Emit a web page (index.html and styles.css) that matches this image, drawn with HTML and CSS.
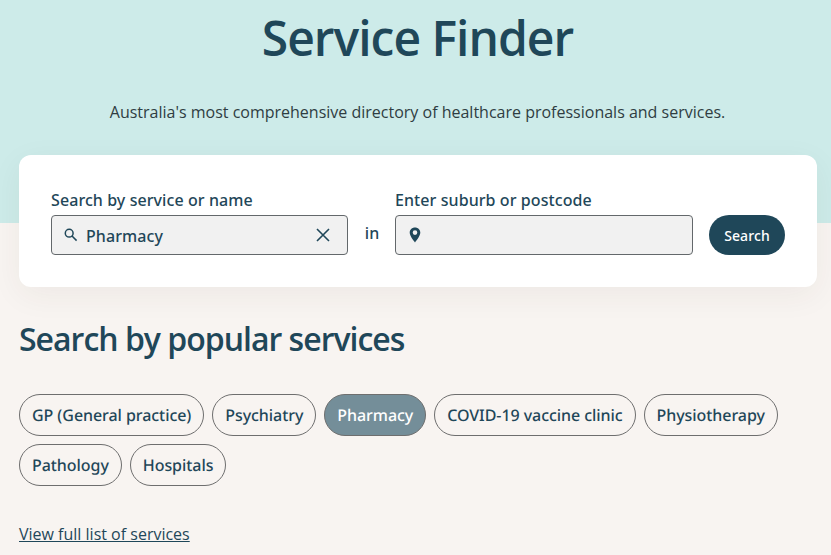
FILE: index.html
```html
<!DOCTYPE html>
<html lang="en">
<head>
    <meta charset="UTF-8">
    <meta name="viewport" content="width=device-width, initial-scale=1.0">
    <title>Service Finder</title>
    <link rel="stylesheet" href="styles.css">
</head>
<body>
    <div class="hero">
        <h1 class="title">Service Finder</h1>
        <p class="subtitle">Australia's most comprehensive directory of healthcare professionals and services.</p>
    </div>

    <div class="content">
        <!-- Search card -->
        <form class="search-card">
            <div class="field field-service">
                <label for="service">Search by service or name</label>
                <div class="input-box">
                    <svg class="icon-search" width="14" height="14" viewBox="0 0 14 14" fill="none" stroke="#1f4759" stroke-width="1.5">
                        <circle cx="5.2" cy="5.2" r="3.9"/>
                        <path d="M8 8 L12.6 12.6"/>
                    </svg>
                    <input type="text" id="service" value="Pharmacy">
                    <svg class="icon-clear" width="14" height="14" viewBox="0 0 14 14" fill="none" stroke="#1f4759" stroke-width="1.6">
                        <path d="M1 1 L13 13 M13 1 L1 13"/>
                    </svg>
                </div>
            </div>
            <span class="in-word">in</span>
            <div class="field field-suburb">
                <label for="suburb">Enter suburb or postcode</label>
                <div class="input-box">
                    <svg class="icon-pin" width="12" height="16" viewBox="0 0 12 16">
                        <path fill="#1f4759" fill-rule="evenodd" d="M6 .5C3 .5.7 2.700.7 5.600c0 3.200 3.200 7.200 5.300 9.900 2.100-2.700 5.300-6.700 5.300-9.900C11.300 2.700 9 .5 6 .5ZM6 3.300a2.300 2.300 0 1 1 0 4.600 2.300 2.300 0 0 1 0-4.600Z"/>
                    </svg>
                    <input type="text" id="suburb">
                </div>
            </div>
            <button type="button" class="search-btn">Search</button>
        </form>

        <h2 class="popular-title">Search by popular services</h2>

        <div class="chips">
            <a class="chip">GP (General practice)</a>
            <a class="chip">Psychiatry</a>
            <a class="chip active">Pharmacy</a>
            <a class="chip">COVID-19 vaccine clinic</a>
            <a class="chip">Physiotherapy</a>
            <a class="chip">Pathology</a>
            <a class="chip">Hospitals</a>
        </div>

        <a class="full-list" href="#">View full list of services</a>
    </div>
</body>
</html>
```
FILE: styles.css
```css
html, body {
    height: 100%;
}

body {
    font-family: "Open Sans", "Noto Sans", sans-serif;
    background-color: #f8f4f1;
    color: #1f4759;
    margin: 0;
    padding: 0;
    overflow: hidden;
}

.hero {
    background-color: #cdebe9;
    height: 223px;
    padding-left: 4px;
    box-sizing: border-box;
    text-align: center;
    overflow: hidden;
}

.title {
    font-size: 48px;
    line-height: 60px;
    font-weight: 600;
    letter-spacing: -1px;
    margin: 8px 0 0 0;
}

.subtitle {
    font-size: 16px;
    line-height: 24px;
    color: #2f3d42;
    margin: 32px 0 0 0;
}

.content {
    padding: 0 14px 0 19px;
}

.search-card {
    display: flex;
    align-items: flex-end;
    height: 132px;
    box-sizing: border-box;
    margin-top: -68px;
    padding: 0 32px 32px 32px;
    background-color: white;
    border-radius: 12px;
    box-shadow: 0px 8px 32px rgba(60, 50, 40, 0.06);
    position: relative;
}

.field label {
    display: block;
    font-family: "Noto Sans", sans-serif;
    font-size: 16px;
    line-height: 22px;
    font-weight: 500;
    letter-spacing: 0.08px;
    margin-bottom: 4px;
}

.field-service {
    width: 297px;
}

.field-suburb {
    width: 298px;
}

.input-box {
    display: flex;
    align-items: center;
    height: 40px;
    box-sizing: border-box;
    background-color: #f1f1f1;
    border: 1px solid #63686b;
    border-radius: 4px;
    padding: 0 17px 0 12px;
}

.input-box input {
    flex: 1;
    min-width: 0;
    border: none;
    outline: none;
    background: none;
    padding: 2px 0 0 0;
    font-family: "Noto Sans", sans-serif;
    font-size: 16px;
    font-weight: 500;
    letter-spacing: 0.08px;
    color: #1f4759;
}

.icon-search {
    margin-right: 8px;
}

.icon-pin {
    margin-left: 1px;
}

.in-word {
    width: 47px;
    box-sizing: border-box;
    padding-left: 1px;
    text-align: center;
    font-family: "Noto Sans", sans-serif;
    font-size: 16px;
    line-height: 36px;
    height: 40px;
    font-weight: 500;
}

.search-btn {
    width: 76px;
    height: 40px;
    margin-left: 16px;
    padding: 0;
    background-color: #1f4759;
    color: white;
    border: none;
    border-radius: 20px;
    font-family: "Noto Sans", sans-serif;
    font-size: 14px;
    font-weight: 500;
    letter-spacing: 0.1px;
}

.popular-title {
    font-size: 32px;
    line-height: 44px;
    font-weight: 600;
    letter-spacing: -1px;
    margin: 30px 0 0 0;
}

.chips {
    display: flex;
    flex-wrap: wrap;
    gap: 8px;
    margin-top: 33px;
}

.chip {
    display: block;
    height: 42px;
    box-sizing: border-box;
    padding: 0 12px;
    border: 1px solid #6e6e6e;
    border-radius: 21px;
    font-family: "Noto Sans", sans-serif;
    font-size: 16px;
    line-height: 40px;
    font-weight: 500;
    letter-spacing: -0.06px;
    text-rendering: geometricPrecision;
}

.chip.active {
    background-color: #748e99;
    color: white;
}

.full-list {
    display: inline-block;
    margin-top: 36px;
    font-size: 16px;
    line-height: 24px;
    color: #1f4759;
}
```
